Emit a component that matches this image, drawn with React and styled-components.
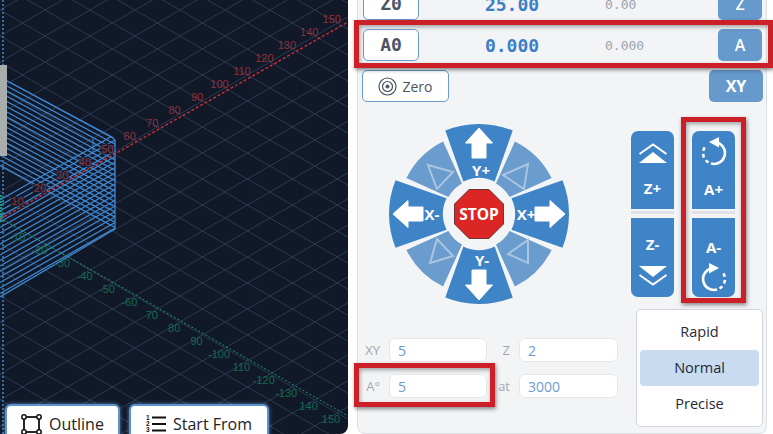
import React from 'react';
import styled, { createGlobalStyle } from 'styled-components';

const GlobalStyle = createGlobalStyle`
  html, body {
    margin: 0;
    padding: 0;
    background: #fff;
    font-family: "Open Sans", Arial, sans-serif;
  }
`;

const Page = styled.div`
  display: flex;
  gap: 9px;
  width: 773px;
  height: 434px;
  overflow: hidden;
  background: #fff;
`;

const Canvas = styled.div`
  position: relative;
  flex: 0 0 348px;
  height: 434px;
  overflow: hidden;
  background: #111827;
  border-bottom-right-radius: 8px;
`;

const CanvasButtons = styled.div`
  position: absolute;
  left: 5px;
  top: 404px;
  display: flex;
  gap: 9px;
`;

const CanvasButton = styled.button`
  display: flex;
  align-items: center;
  justify-content: center;
  gap: 7px;
  width: ${({ $w }) => $w}px;
  height: 42px;
  padding: 0 0 2px;
  background: #fff;
  border: 2px solid #5b93cf;
  border-radius: 6px;
  box-shadow: 0 0 4px rgba(120, 170, 225, 0.7);
  color: #222;
  font: 400 16px "Open Sans", sans-serif;
`;

const Panel = styled.div`
  flex: 0 0 410px;
  box-sizing: border-box;
  height: 434px;
  background: #f3f4f6;
  border: 1px solid #dcdfe4;
  border-top: 0;
  border-radius: 0 0 8px 8px;
`;

const AxisRow = styled.div`
  position: relative;
  display: grid;
  grid-template-columns: 56px 186px 113px 44px;
  align-items: center;
  height: 32px;
  margin: ${({ $first }) => ($first ? '-12px' : '9px')} 0 0 5px;
  width: 399px;
`;

const AxisName = styled.div`
  box-sizing: border-box;
  height: 32px;
  text-align: center;
  background: #fff;
  border: 1px solid #6a9ad0;
  border-radius: 5px;
  color: #4b5563;
  font: 700 18px/30px "DejaVu Sans Mono", monospace;
`;

const AxisValue = styled.div`
  text-align: center;
  color: #3b7ec8;
  font: 700 18px "DejaVu Sans Mono", monospace;
`;

const AxisRaw = styled.div`
  color: #9ca3af;
  font: 400 13px "DejaVu Sans Mono", monospace;
`;

const AxisButton = styled.button`
  height: 32px;
  padding: 0;
  border: 0;
  border-radius: 5px;
  background: #6699cc;
  color: #fff;
  font: 600 16px "Open Sans", sans-serif;
`;

const Highlight = styled.div`
  position: absolute;
  inset: ${({ $inset }) => $inset};
  border: 5px solid #cc1f27;
  box-shadow: 1px 2px 4px rgba(0, 0, 0, 0.45), inset 1px 2px 4px rgba(0, 0, 0, 0.35);
  pointer-events: none;
`;

const ControlRow = styled.div`
  display: flex;
  justify-content: space-between;
  margin: 9px 3px 0 4px;
`;

const ZeroButton = styled.button`
  display: flex;
  align-items: center;
  justify-content: center;
  gap: 5px;
  box-sizing: border-box;
  width: 87px;
  height: 32px;
  padding: 0;
  background: #fff;
  border: 1px solid #6a9ad0;
  border-radius: 5px;
  color: #4b5563;
  font: 400 14px "Open Sans", sans-serif;
`;

const XyButton = styled(AxisButton)`
  width: 54px;
  font-weight: 700;
`;

const Body = styled.div`
  display: grid;
  grid-template-columns: 273px 132px;
`;

const LeftColumn = styled.div`
  display: flex;
  flex-direction: column;
`;

const Wheel = styled.svg`
  display: block;
  width: 180px;
  height: 180px;
  margin: 22px 0 0 31px;
`;

const WheelLabel = styled.text`
  fill: #fff;
  font: 700 ${({ $size }) => $size || 15}px "Open Sans", sans-serif;
  text-anchor: middle;
`;

const StepGrid = styled.div`
  display: grid;
  grid-template-columns: 31px 98px 32px 99px;
  row-gap: 12px;
  margin-top: 34px;
`;

const StepLabel = styled.label`
  padding-right: 9px;
  text-align: right;
  color: #a3a8b3;
  font: 400 13px/24px "Open Sans", sans-serif;
`;

const StepCell = styled.div`
  position: relative;
`;

const StepInput = styled.div`
  box-sizing: border-box;
  height: 24px;
  padding-left: 8px;
  background: #fff;
  border: 1px solid #e5e7eb;
  border-radius: 6px;
  color: #6b9bd2;
  font: 400 14px/24px "Open Sans", sans-serif;
`;

const RightColumn = styled.div`
  display: flex;
  flex-direction: column;
  margin-top: 29px;
`;

const JogColumns = styled.div`
  display: flex;
  gap: 18px;
`;

const JogColumn = styled.div`
  position: relative;
  display: flex;
  flex-direction: column;
  width: 43px;
`;

const JogButton = styled.div`
  display: flex;
  flex-direction: ${({ $down }) => ($down ? 'column-reverse' : 'column')};
  align-items: center;
  gap: ${({ $gap }) => $gap}px;
  box-sizing: border-box;
  height: ${({ $down }) => ($down ? 79 : 78)}px;
  padding: ${({ $down, $pad }) => ($down ? `0 0 ${$pad}px` : `${$pad}px 0 0`)};
  background: #3f84c7;
  border-radius: ${({ $down }) => ($down ? '0 0 7px 7px' : '7px 7px 0 0')};
  color: #fff;
  font: 700 15px/16px "Open Sans", sans-serif;
`;

const JogDivider = styled.div`
  height: 9px;
  background: linear-gradient(#f3f4f6 2px, #dfe1e6 2px, #dfe1e6 5px, #f3f4f6 5px);
`;

const FlipIcon = styled.svg`
  display: block;
  flex: none;
  transform: ${({ $flipX, $flipY }) => `scale(${$flipX ? -1 : 1}, ${$flipY ? -1 : 1})`};
`;

const SpeedBox = styled.div`
  display: flex;
  flex-direction: column;
  box-sizing: border-box;
  width: 127px;
  height: 118px;
  margin: 12px 0 0 5px;
  padding: 4px 3px;
  background: #fff;
  border: 1px solid #d1d5db;
  border-radius: 5px;
`;

const SpeedOption = styled.div`
  flex: 1;
  text-align: center;
  border-radius: 4px;
  color: #1f2937;
  font: 400 14.5px/36px "Open Sans", sans-serif;
  background: ${({ $active }) => ($active ? '#c8dbf0' : 'transparent')};
`;

// grid, axes and toolpath of the 3d view
const STEP_Y = 26;
const SLOPE = 0.578;
const ORIGIN_Y = 218;

const range = (from, to) => Array.from({ length: to - from + 1 }, (_, i) => from + i);

const redLabels = range(1, 15).map((k) => ({ t: k * 10, x: -5 + 22.45 * k, y: 214 - 13 * k }));
const greenText = ['-10', '-20', '-30', '-40', '-50', '-60', '70', '80', '90', '-100', '110', '-120', '-130', '140', '150'];
const greenLabels = greenText.map((t, i) => ({ t, x: -5 + 22.4 * (i + 1), y: 224 + 13 * (i + 1) }));

function SceneDrawing() {
  return (
    <svg width="348" height="434" viewBox="0 0 348 434" style={{ display: 'block' }}>
      <defs>
        <clipPath id="part">
          <polygon points="0,77 112,137 115,140 115,229 0,297" />
        </clipPath>
      </defs>
      {range(-22, 22).map((k) => (
        <g key={k} stroke="#2a3b54" strokeWidth="1">
          <line x1="0" y1={ORIGIN_Y + k * STEP_Y} x2="348" y2={ORIGIN_Y + k * STEP_Y + 348 * SLOPE} />
          <line x1="0" y1={ORIGIN_Y + k * STEP_Y} x2="348" y2={ORIGIN_Y + k * STEP_Y - 348 * SLOPE} />
        </g>
      ))}

      <g clipPath="url(#part)" stroke="#3f86cf" strokeWidth="1.3" fill="none">
        {range(0, 17).map((k) => (
          <line key={k} x1="0" y1={77 + k * 5.2} x2="115" y2={77 + k * 5.2 + 115 * 0.54} />
        ))}
        {range(0, 18).map((k) => (
          <line key={k} x1="0" y1={200 + k * 5.5} x2="115" y2={200 + k * 5.5 - 115 * 0.57} />
        ))}
      </g>
      <path d="M0 77 L112 137 L115 140 V229 L0 297" fill="none" stroke="#3f86cf" strokeWidth="1.3" />
      <path d="M93 139 V152" fill="none" stroke="#3f86cf" strokeWidth="1" />

      <line x1="3" y1="0" x2="3" y2="434" stroke="#2f6ca8" strokeWidth="2" strokeDasharray="2 2" />
      <rect x="0" y="65" width="7" height="91" fill="#a9adab" />
      <line x1="1" y1="195" x2="1" y2="222" stroke="#0d9f78" strokeWidth="2" strokeDasharray="2 1" />

      <line x1="0" y1="219" x2="348" y2="22" stroke="#c9303c" strokeWidth="1.4" strokeDasharray="3 2" />
      <line x1="0" y1="218" x2="348" y2="416" stroke="#0d9f78" strokeWidth="1" strokeDasharray="2 2" />

      {redLabels.map((l) => (
        <text
          key={l.t}
          x={l.x}
          y={l.y + 4}
          textAnchor="middle"
          fontFamily="Liberation Sans, Arial, sans-serif"
          fontSize="11"
          fill="#92303c"
          stroke={l.t <= 50 ? '#111827' : 'none'}
          strokeOpacity="0.75"
          strokeWidth="3"
          paintOrder="stroke"
        >
          {l.t}
        </text>
      ))}
      {greenLabels.map((l) => (
        <text
          key={l.t}
          x={l.x}
          y={l.y + 4}
          textAnchor="middle"
          fontFamily="Liberation Sans, Arial, sans-serif"
          fontSize="11"
          fill="#136b54"
        >
          {l.t}
        </text>
      ))}
    </svg>
  );
}

const polar = (r, deg) => {
  const a = ((deg - 90) * Math.PI) / 180;
  return `${(r * Math.cos(a)).toFixed(2)} ${(r * Math.sin(a)).toFixed(2)}`;
};

const wedge = (center, outHalf, inHalf, R, r) =>
  `M${polar(r, center - inHalf)} L${polar(R, center - outHalf)} A${R} ${R} 0 0 1 ${polar(R, center + outHalf)} L${polar(r, center + inHalf)} A${r} ${r} 0 0 0 ${polar(r, center - inHalf)} Z`;

const ARROW = 'M0 -86 L13.5 -71 H7 V-56 H-7 V-71 H-13.5 Z';

const triangles = [
  '24,-39 49,-50 45,-25',
  '-51,-49 -26,-42 -42,-25',
  '-49,49 -26,42 -42,25',
  '29,40 49,26 49,49',
];

function JogWheel() {
  return (
    <Wheel viewBox="-90 -90 180 180">
      {[0, 90, 180, 270].map((a) => (
        <path key={a} d={wedge(a, 22, 25.8, 90, 36)} fill="#3f84c7" />
      ))}
      {[45, 135, 225, 315].map((a) => (
        <path key={a} d={wedge(a, 18.7, 16, 81, 35)} fill="#6a9ccd" />
      ))}
      {triangles.map((p) => (
        <polygon key={p} points={p} fill="none" stroke="#a9c5e2" strokeWidth="2" />
      ))}
      {[0, 90, 180, 270].map((a) => (
        <path key={a} d={ARROW} fill="#fff" stroke="#fff" strokeWidth="1" strokeLinejoin="round" transform={`rotate(${a})`} />
      ))}
      <WheelLabel x="2" y="-38">Y+</WheelLabel>
      <WheelLabel x="3" y="52">Y-</WheelLabel>
      <WheelLabel x="-47" y="6">X-</WheelLabel>
      <WheelLabel x="47" y="6">X+</WheelLabel>
      <polygon
        points="-10,-24.5 10,-24.5 24.5,-10 24.5,10 10,24.5 -10,24.5 -24.5,10 -24.5,-10"
        fill="#dc2626"
        stroke="#4a2222"
        strokeWidth="0.8"
      />
      <WheelLabel x="0" y="5.5" $size={15.5}>STOP</WheelLabel>
    </Wheel>
  );
}

function Chevrons({ flip }) {
  return (
    <FlipIcon $flipY={flip} width="30" height="20" viewBox="0 0 30 20">
      <polyline points="1.5,11 15,1.5 28.5,11" fill="none" stroke="#fff" strokeWidth="2" />
      <polygon points="1,20 15,9 29,20" fill="#fff" />
    </FlipIcon>
  );
}

function RotateIcon({ flip }) {
  return (
    <FlipIcon $flipX={flip} width="30" height="30" viewBox="0 0 30 30">
      <path d="M15 5 A11 11 0 1 1 12 26.6" fill="none" stroke="#fff" strokeWidth="2.6" />
      <path d="M9.5 25.5 A11 11 0 0 1 7.5 8" fill="none" stroke="#fff" strokeWidth="2.6" strokeDasharray="3.6 3.2" />
      <polygon points="20,0 10,5 20,10.5" fill="#fff" />
    </FlipIcon>
  );
}

function OutlineIcon() {
  return (
    <svg width="21" height="21" viewBox="0 0 21 21">
      <rect x="3" y="3" width="15" height="15" fill="none" stroke="#111" strokeWidth="1.8" />
      {[[3, 3], [18, 3], [3, 18], [18, 18]].map(([x, y]) => (
        <circle key={`${x}-${y}`} cx={x} cy={y} r="2.2" fill="#fff" stroke="#111" strokeWidth="1.5" />
      ))}
    </svg>
  );
}

function ListIcon() {
  return (
    <svg width="20" height="18" viewBox="0 0 20 18">
      {[['1', 5], ['2', 11], ['3', 17]].map(([d, y]) => (
        <text key={d} x="0" y={y} fontSize="6.5" fontWeight="700" fontFamily="Liberation Sans, sans-serif" fill="#111">{d}</text>
      ))}
      <path d="M6 2.5 H20 M6 9 H20 M6 15.5 H20" stroke="#111" strokeWidth="2" />
    </svg>
  );
}

function ZeroIcon() {
  return (
    <svg width="19" height="19" viewBox="0 0 19 19" fill="none" stroke="#4b5563">
      <circle cx="9.5" cy="9.5" r="8.5" strokeWidth="1.2" />
      <circle cx="9.5" cy="9.5" r="5" strokeWidth="1.2" />
      <circle cx="9.5" cy="9.5" r="1.6" fill="#4b5563" />
    </svg>
  );
}

export default function App() {
  return (
    <Page>
      <GlobalStyle />
      <Canvas>
        <SceneDrawing />
        <CanvasButtons>
          <CanvasButton $w={115}><OutlineIcon />Outline</CanvasButton>
          <CanvasButton $w={140}><ListIcon />Start From</CanvasButton>
        </CanvasButtons>
      </Canvas>

      <Panel>
        <AxisRow $first>
          <AxisName>Z0</AxisName>
          <AxisValue>25.00</AxisValue>
          <AxisRaw>0.00</AxisRaw>
          <AxisButton>Z</AxisButton>
        </AxisRow>
        <AxisRow>
          <AxisName>A0</AxisName>
          <AxisValue>0.000</AxisValue>
          <AxisRaw>0.000</AxisRaw>
          <AxisButton>A</AxisButton>
          <Highlight $inset="-9px -11px -7px -9px" />
        </AxisRow>
        <ControlRow>
          <ZeroButton><ZeroIcon />Zero</ZeroButton>
          <XyButton>XY</XyButton>
        </ControlRow>

        <Body>
          <LeftColumn>
            <JogWheel />
            <StepGrid>
              <StepLabel>XY</StepLabel>
              <StepCell><StepInput>5</StepInput></StepCell>
              <StepLabel>Z</StepLabel>
              <StepCell><StepInput>2</StepInput></StepCell>
              <StepLabel>A°</StepLabel>
              <StepCell>
                <StepInput>5</StepInput>
                <Highlight $inset="-11px -8px -9px -35px" />
              </StepCell>
              <StepLabel>at</StepLabel>
              <StepCell><StepInput>3000</StepInput></StepCell>
            </StepGrid>
          </LeftColumn>

          <RightColumn>
            <JogColumns>
              <JogColumn>
                <JogButton $pad={12} $gap={17}><Chevrons />Z+</JogButton>
                <JogDivider />
                <JogButton $down $pad={11} $gap={14}><Chevrons flip />Z-</JogButton>
              </JogColumn>
              <JogColumn>
                <JogButton $pad={6} $gap={14}><RotateIcon />A+</JogButton>
                <JogDivider />
                <JogButton $down $pad={4} $gap={8}><RotateIcon flip />A-</JogButton>
                <Highlight $inset="-14px -11px -6px -11px" />
              </JogColumn>
            </JogColumns>
            <SpeedBox>
              <SpeedOption>Rapid</SpeedOption>
              <SpeedOption $active>Normal</SpeedOption>
              <SpeedOption>Precise</SpeedOption>
            </SpeedBox>
          </RightColumn>
        </Body>
      </Panel>
    </Page>
  );
}
